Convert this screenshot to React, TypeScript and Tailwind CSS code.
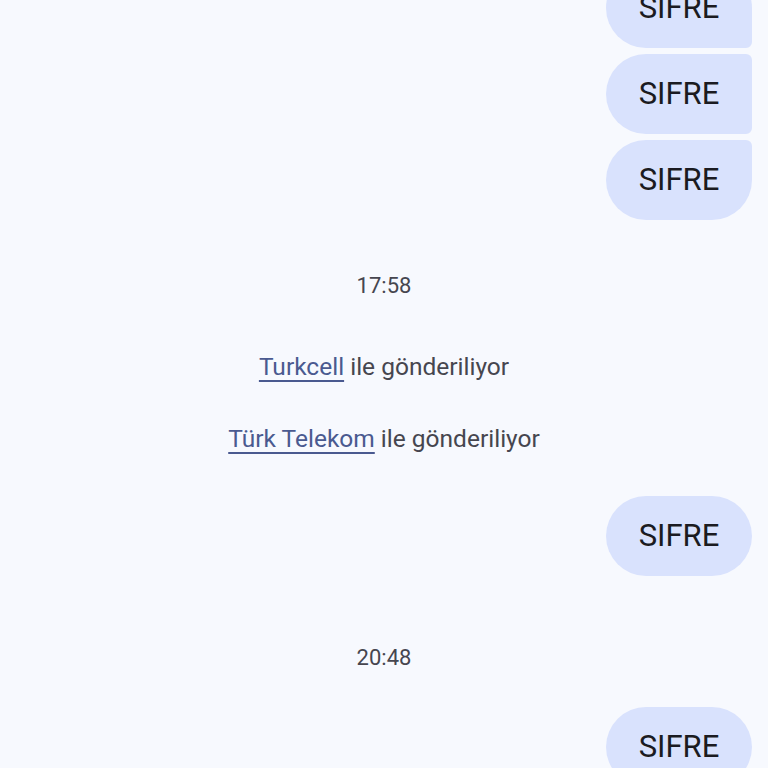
import React from "react";

const font = { fontFamily: "Roboto, 'Noto Sans', sans-serif" };

function Bubble({ shape, className = "" }: { shape: string; className?: string }) {
  return (
    <div className={`flex h-[80px] w-[146px] items-center justify-center bg-[#d9e2fd] text-[31px] text-[#1b1b21] ${shape} ${className}`}>
      SIFRE
    </div>
  );
}

function Stamp({ children, className = "" }: { children: React.ReactNode; className?: string }) {
  return <div className={`text-center text-[22px] leading-[28px] text-[#46464f] ${className}`}>{children}</div>;
}

function Sent({ carrier, className = "" }: { carrier: string; className?: string }) {
  return (
    <div className={`text-center text-[24.5px] leading-[28px] text-[#46464f] ${className}`}>
      <span className="text-[#4a5a90] underline decoration-[1.5px] underline-offset-[5px]">{carrier}</span> ile gönderiliyor
    </div>
  );
}

export default function App() {
  return (
    <div className="h-[768px] w-[768px] overflow-hidden bg-[#f7f9fe]" style={font}>
      <div className="mt-[-32px] flex flex-col items-end gap-[6px] pr-[16px]">
        <Bubble shape="rounded-l-[40px] rounded-tr-[40px] rounded-br-[6px]" />
        <Bubble shape="rounded-l-[40px] rounded-r-[6px]" />
        <Bubble shape="rounded-l-[40px] rounded-tr-[6px] rounded-br-[40px]" />
      </div>
      <Stamp className="mt-[52px]">17:58</Stamp>
      <Sent carrier="Turkcell" className="mt-[53px]" />
      <Sent carrier="Türk Telekom" className="mt-[44px]" />
      <div className="mt-[43px] flex justify-end pr-[16px]">
        <Bubble shape="rounded-[40px]" />
      </div>
      <Stamp className="mt-[68px]">20:48</Stamp>
      <div className="mt-[35px] flex justify-end pr-[16px]">
        <Bubble shape="rounded-[40px]" />
      </div>
    </div>
  );
}
